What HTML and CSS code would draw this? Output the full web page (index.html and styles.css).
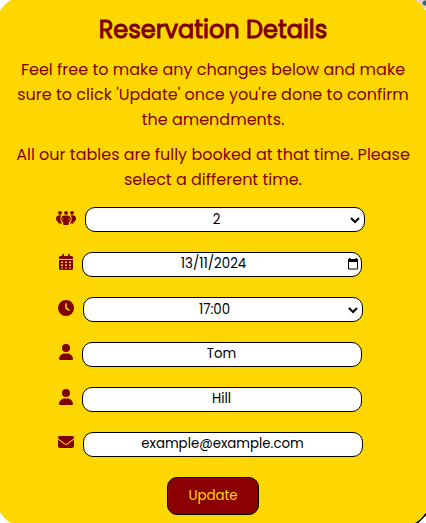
FILE: index.html
```html
<!DOCTYPE html>
<html lang="en-GB">
<head>
<meta charset="utf-8">
<meta name="viewport" content="width=device-width, initial-scale=1">
<title>Reservation Details</title>
<link rel="stylesheet" href="styles.css">
</head>
<body>
<main class="card">
  <h1 class="title">Reservation Details</h1>
  <p class="text">Feel free to make any changes below and make sure to click 'Update' once you're done to confirm the amendments.</p>
  <p class="text">All our tables are fully booked at that time. Please select a different time.</p>
  <form class="form">
    <div class="row">
      <label for="guests" aria-label="Guests">
        <svg class="icon" width="20" height="16" viewBox="0 0 20 16">
          <circle cx="4" cy="2.800" r="1.900"/><circle cx="10" cy="2.800" r="1.900"/><circle cx="16" cy="2.800" r="1.900"/>
          <path d="M3.300 5.300h2.200C4.700 6.400 4.400 7.600 4.400 9c0 1.600.5 2.900 1.500 3.800v.7H2.400v-1.500C.9 11.200 0 10.100 0 8.700c0-1.900 1.300-3.400 3.300-3.400zM16.700 5.300h-2.200c.8 1.100 1.100 2.300 1.100 3.700 0 1.600-.5 2.900-1.500 3.800v.7h3.500v-1.500c1.500-.8 2.400-1.900 2.400-3.300 0-1.900-1.300-3.400-3.300-3.400z"/>
          <path d="M8.600 5.600h2.800c2 0 3.400 1.600 3.400 3.500 0 1.400-.8 2.500-2 3.100V14c0 .6-.4 1-1 1H8.200c-.6 0-1-.4-1-1v-1.800c-1.200-.6-2-1.700-2-3.100 0-1.900 1.400-3.500 3.400-3.500z"/>
          <path class="cut" d="M7 8v2M13 8v2"/>
        </svg>
      </label>
      <span class="control">
        <select class="field" id="guests"><option>1</option><option selected>2</option><option>3</option><option>4</option></select>
        <svg class="arrow" width="10" height="7" viewBox="0 0 10 7"><path d="M1 1l4 4 4-4"/></svg>
      </span>
    </div>
    <div class="row">
      <label class="raised" for="date" aria-label="Date">
        <svg class="icon" width="14" height="16" viewBox="0 0 448 512"><path d="M128 0c17.700 0 32 14.300 32 32v32h128V32c0-17.700 14.300-32 32-32s32 14.300 32 32v32h48c26.500 0 48 21.500 48 48v48H0v-48c0-26.500 21.500-48 48-48h48V32c0-17.700 14.300-32 32-32zM0 192h448v272c0 26.500-21.500 48-48 48H48c-26.500 0-48-21.500-48-48V192zm64 48v48h64v-48H64zm128 0v48h64v-48h-64zm128 0v48h64v-48h-64zM64 336v48h64v-48H64zm128 0v48h64v-48h-64zm128 0v48h64v-48h-64zM64 432v32h64v-32H64zm128 0v32h64v-32h-64zm128 0v32h64v-32h-64z" fill-rule="evenodd"/></svg>
      </label>
      <span class="control">
        <input class="field" id="date" type="text" inputmode="numeric" value="13/11/2024">
        <button class="picker" type="button" aria-label="Open calendar">
          <svg width="12" height="12" viewBox="0 0 12 12"><path d="M1.500 2h9v9h-9z" fill="none" stroke="#000"/><path d="M1 1h10v3H1zM2 0h1.500v2H2zM8.500 0H10v2H8.500z"/></svg>
        </button>
      </span>
    </div>
    <div class="row">
      <label for="time" aria-label="Time">
        <svg class="icon" width="16" height="16" viewBox="0 0 512 512"><path d="M256 0a256 256 0 1 1 0 512A256 256 0 1 1 256 0zM232 120v136c0 8 4 15.500 10.700 20l96 64c11 7.400 25.900 4.400 33.300-6.700s4.400-25.900-6.700-33.300L280 243.200V120c0-13.300-10.700-24-24-24s-24 10.700-24 24z" fill-rule="evenodd"/></svg>
      </label>
      <span class="control">
        <select class="field" id="time"><option>16:00</option><option selected>17:00</option><option>18:00</option></select>
        <svg class="arrow" width="10" height="7" viewBox="0 0 10 7"><path d="M1 1l4 4 4-4"/></svg>
      </span>
    </div>
    <div class="row">
      <label class="raised" for="first" aria-label="First name">
        <svg class="icon" width="14" height="16" viewBox="0 0 448 512"><path d="M224 256A128 128 0 1 0 224 0a128 128 0 1 0 0 256zm-45.700 48C79.800 304 0 383.800 0 482.300 0 498.700 13.300 512 29.700 512h388.600c16.400 0 29.700-13.300 29.700-29.700C448 383.800 368.200 304 269.700 304h-91.400z"/></svg>
      </label>
      <input class="field" id="first" type="text" value="Tom">
    </div>
    <div class="row">
      <label class="raised" for="last" aria-label="Last name">
        <svg class="icon" width="14" height="16" viewBox="0 0 448 512"><path d="M224 256A128 128 0 1 0 224 0a128 128 0 1 0 0 256zm-45.700 48C79.800 304 0 383.800 0 482.300 0 498.700 13.300 512 29.700 512h388.600c16.400 0 29.700-13.300 29.700-29.700C448 383.800 368.200 304 269.700 304h-91.400z"/></svg>
      </label>
      <input class="field" id="last" type="text" value="Hill">
    </div>
    <div class="row">
      <label class="raised" for="email" aria-label="Email">
        <svg class="icon" width="16" height="16" viewBox="0 0 512 512"><path d="M48 64C21.500 64 0 85.500 0 112c0 15.100 7.100 29.300 19.200 38.400l217.600 163.200c11.400 8.500 27 8.500 38.400 0l217.600-163.200c12.100-9.100 19.200-23.300 19.200-38.400 0-26.500-21.500-48-48-48H48zM0 176v208c0 35.300 28.700 64 64 64h384c35.300 0 64-28.700 64-64V176L294.400 339.200c-22.800 17.100-54 17.100-76.800 0L0 176z"/></svg>
      </label>
      <input class="field" id="email" type="email" value="example@example.com">
    </div>
    <button class="update" type="submit">Update</button>
  </form>
</main>
</body>
</html>
```
FILE: styles.css
```css
* {
  box-sizing: border-box;
}

html {
  overflow: hidden;
}

body {
  margin: 0;
  overflow: hidden;
  font-family: Poppins, Inter, "Liberation Sans", sans-serif;
  background:
    linear-gradient(135deg, transparent 45%, #111 45%, #111 65%, transparent 65%) right bottom / 12px 10px no-repeat,
    radial-gradient(circle at 9px 3px, #1d6f80 2px, transparent 3px) right top / 10px 12px no-repeat,
    linear-gradient(#f6c9cf, #f6c9cf) right top / 12px 8px no-repeat,
    #fff;
}

.card {
  margin: -4px;
  padding: 16px 16px 12px;
  border-radius: 30px;
  background: #ffd700;
  color: #800000;
  text-align: center;
}

.title {
  margin: 0 0 9px;
  font-size: 24px;
  line-height: 36px;
  font-weight: 400;
  -webkit-text-stroke: 1px #800000;
}

.text {
  margin: 0 0 10px;
  font-size: 16px;
  line-height: 25px;
}

.form {
  display: flex;
  flex-direction: column;
  align-items: center;
  gap: 20px;
  padding-top: 5px;
}

.row {
  display: flex;
  align-items: center;
  gap: 9px;
  max-width: 100%;
  padding-right: 6px;
}

.row label {
  display: flex;
  padding-bottom: 4px;
}

.row .raised {
  padding-bottom: 6px;
}

.icon {
  fill: #800000;
}

.cut {
  fill: none;
  stroke: #ffd700;
  stroke-width: 0.6;
}

.control {
  position: relative;
}

.field {
  display: block;
  width: 280px;
  height: 25px;
  min-width: 0;
  margin: 0;
  padding: 0 4px;
  border: 1px solid #000;
  border-radius: 10px;
  background-color: #fff;
  color: #000;
  font-family: inherit;
  text-align: center;
}

input.field {
  padding-bottom: 2px;
}

select.field {
  appearance: none;
}

.control .field {
  padding-right: 20px;
}

.arrow {
  position: absolute;
  top: 10px;
  right: 5px;
  fill: none;
  stroke: #000;
  stroke-width: 2;
  pointer-events: none;
}

.picker {
  position: absolute;
  top: 6px;
  right: 3px;
  display: flex;
  padding: 0;
  border: 0;
  background: none;
}

.update {
  padding: 8px 20px;
  border: 1px solid #000;
  border-radius: 10px;
  background: #8b0000;
  color: #ffd700;
  font-family: inherit;
  line-height: 20px;
}
```
